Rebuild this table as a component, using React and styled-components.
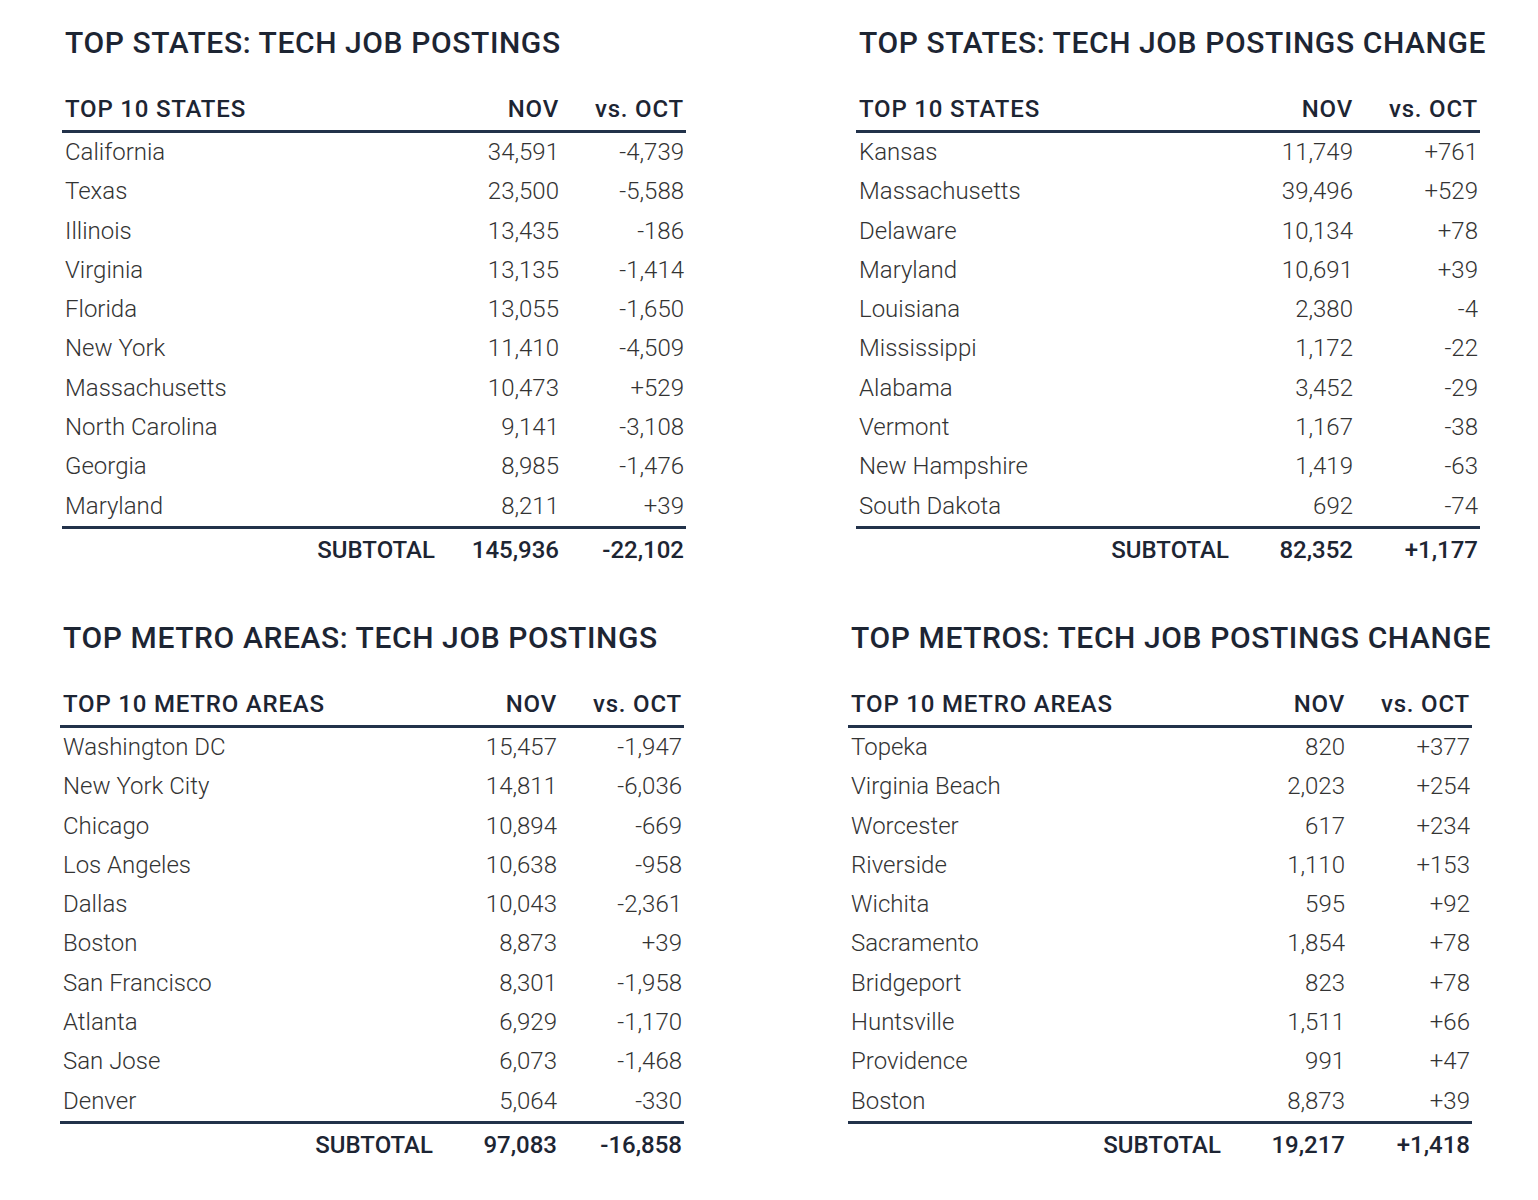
import React from 'react'
import styled, { createGlobalStyle } from 'styled-components'

const tables = [
  {
    title: 'TOP STATES: TECH JOB POSTINGS',
    label: 'TOP 10 STATES',
    shift: 1,
    rows: [
      ['California', '34,591', '-4,739'],
      ['Texas', '23,500', '-5,588'],
      ['Illinois', '13,435', '-186'],
      ['Virginia', '13,135', '-1,414'],
      ['Florida', '13,055', '-1,650'],
      ['New York', '11,410', '-4,509'],
      ['Massachusetts', '10,473', '+529'],
      ['North Carolina', '9,141', '-3,108'],
      ['Georgia', '8,985', '-1,476'],
      ['Maryland', '8,211', '+39'],
    ],
    total: ['145,936', '-22,102'],
  },
  {
    title: 'TOP STATES: TECH JOB POSTINGS CHANGE',
    label: 'TOP 10 STATES',
    shift: 1,
    rows: [
      ['Kansas', '11,749', '+761'],
      ['Massachusetts', '39,496', '+529'],
      ['Delaware', '10,134', '+78'],
      ['Maryland', '10,691', '+39'],
      ['Louisiana', '2,380', '-4'],
      ['Mississippi', '1,172', '-22'],
      ['Alabama', '3,452', '-29'],
      ['Vermont', '1,167', '-38'],
      ['New Hampshire', '1,419', '-63'],
      ['South Dakota', '692', '-74'],
    ],
    total: ['82,352', '+1,177'],
  },
  {
    title: 'TOP METRO AREAS: TECH JOB POSTINGS',
    label: 'TOP 10 METRO AREAS',
    shift: -1,
    rows: [
      ['Washington DC', '15,457', '-1,947'],
      ['New York City', '14,811', '-6,036'],
      ['Chicago', '10,894', '-669'],
      ['Los Angeles', '10,638', '-958'],
      ['Dallas', '10,043', '-2,361'],
      ['Boston', '8,873', '+39'],
      ['San Francisco', '8,301', '-1,958'],
      ['Atlanta', '6,929', '-1,170'],
      ['San Jose', '6,073', '-1,468'],
      ['Denver', '5,064', '-330'],
    ],
    total: ['97,083', '-16,858'],
  },
  {
    title: 'TOP METROS: TECH JOB POSTINGS CHANGE',
    label: 'TOP 10 METRO AREAS',
    shift: -7,
    rows: [
      ['Topeka', '820', '+377'],
      ['Virginia Beach', '2,023', '+254'],
      ['Worcester', '617', '+234'],
      ['Riverside', '1,110', '+153'],
      ['Wichita', '595', '+92'],
      ['Sacramento', '1,854', '+78'],
      ['Bridgeport', '823', '+78'],
      ['Huntsville', '1,511', '+66'],
      ['Providence', '991', '+47'],
      ['Boston', '8,873', '+39'],
    ],
    total: ['19,217', '+1,418'],
  },
]

export default function App() {
  return (
    <>
      <Global />
      <Page>
        {tables.map((t) => (
          <Panel key={t.title} $shift={t.shift}>
            <Title>{t.title}</Title>
            <Head>
              <Cell>{t.label}</Cell>
              <Cell $num>NOV</Cell>
              <Cell $num>vs. OCT</Cell>
            </Head>
            <Body>
              {t.rows.map((r) => (
                <Row key={r[0]}>
                  <Cell>{r[0]}</Cell>
                  <Cell $num>{r[1]}</Cell>
                  <Cell $num>{r[2]}</Cell>
                </Row>
              ))}
            </Body>
            <Total>
              <Cell $num>SUBTOTAL</Cell>
              <Cell $num>{t.total[0]}</Cell>
              <Cell $num>{t.total[1]}</Cell>
            </Total>
          </Panel>
        ))}
      </Page>
    </>
  )
}

const Global = createGlobalStyle`
body {
  margin: 0;
  background: #fff;
  font-family: Roboto, "Liberation Sans", sans-serif;
}
`
const Page = styled.div`
display: grid;
grid-template-columns: 624px 624px;
column-gap: 170px;
row-gap: 48px;
padding: 24px 0 0 61px;
`
const Panel = styled.div`
width: 624px;
margin-left: ${(p) => p.$shift}px;
`
const Title = styled.div`
font-size: 30px;
line-height: 38px;
font-weight: 500;
letter-spacing: 0.6px;
color: #1d2533;
white-space: nowrap;
margin-left: 3px;
margin-bottom: 32px;
`
const Line = styled.div`
display: grid;
grid-template-columns: 1fr 124px 125px;
padding: 0 2px 0 3px;
`
const Head = styled(Line)`
height: 30px;
line-height: 30px;
font-size: 24px;
font-weight: 500;
letter-spacing: 0.8px;
color: #1d2533;
padding-bottom: 6px;
border-bottom: 3px solid #22324a;
`
const Body = styled.div`
border-bottom: 3px solid #22324a;
`
const Row = styled(Line)`
height: 39.3px;
line-height: 39.3px;
font-size: 24px;
font-weight: 300;
color: #333;
`
const Total = styled(Line)`
height: 42px;
line-height: 42px;
font-size: 24px;
font-weight: 500;
color: #1d2533;
`
const Cell = styled.span`
text-align: ${(p) => (p.$num ? 'right' : 'left')};
white-space: nowrap;
`
